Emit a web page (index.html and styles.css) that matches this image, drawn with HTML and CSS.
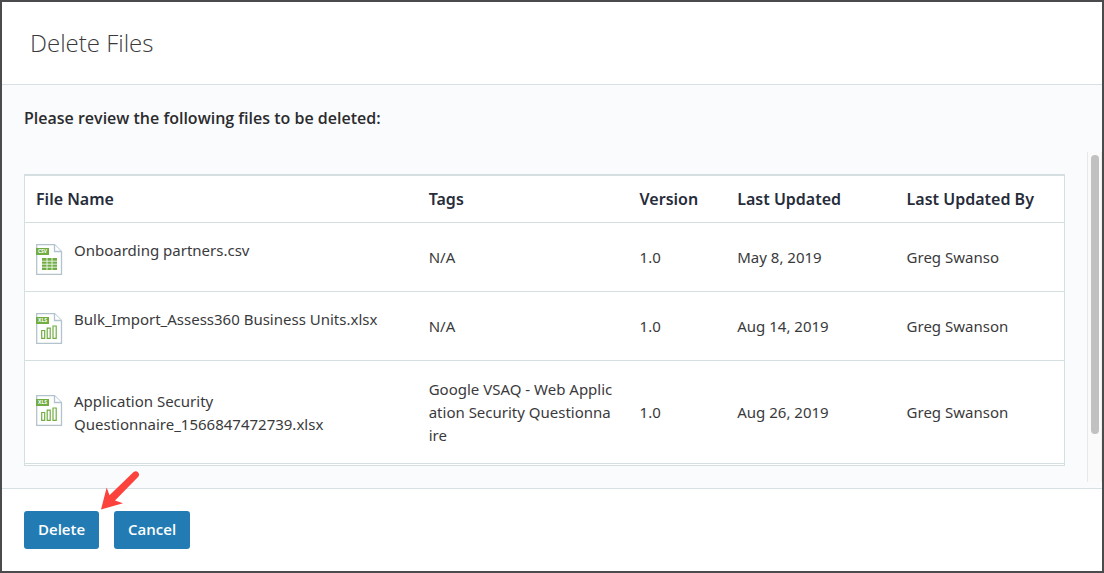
FILE: index.html
```html
<!DOCTYPE html>
<html lang="en">
<head>
    <meta charset="utf-8">
    <title>Delete Files</title>
    <link rel="stylesheet" href="styles.css">
</head>
<body>
    <div class="dialog">
        <header class="dialog-header">
            <h1>Delete Files</h1>
        </header>

        <main class="dialog-body">
            <p class="review-note">Please review the following files to be deleted:</p>
            <div class="scroll-area">
                <table class="file-table">
                    <thead>
                        <tr>
                            <th class="col-name">File Name</th>
                            <th class="col-tags">Tags</th>
                            <th class="col-version">Version</th>
                            <th class="col-updated">Last Updated</th>
                            <th class="col-user">Last Updated By</th>
                        </tr>
                    </thead>
                    <tbody>
                        <tr>
                            <td>
                                <div class="file">
                                    <svg class="file-icon" viewBox="0 0 27 31">
                                        <path class="page" d="M.7 .7H18.500L25.500 7.500V30.300H.7Z"/>
                                        <path class="page" d="M18.500 .7V7.500H25.500"/>
                                        <rect class="fill" x="0" y="4" width="13" height="7"/>
                                        <text class="ext" x="6.500" y="9.300">CSV</text>
                                        <rect class="fill" x="6" y="14" width="15" height="12"/>
                                        <path class="grid" d="M6 17.200H21M6 20.200H21M6 23.200H21M11 14V26M16 14V26"/>
                                    </svg>
                                    <span>Onboarding partners.csv</span>
                                </div>
                            </td>
                            <td class="tags">N/A</td>
                            <td>1.0</td>
                            <td>May 8, 2019</td>
                            <td>Greg Swanso</td>
                        </tr>
                        <tr>
                            <td>
                                <div class="file">
                                    <svg class="file-icon" viewBox="0 0 27 31">
                                        <path class="page" d="M.7 .7H18.500L25.500 7.500V30.300H.7Z"/>
                                        <path class="page" d="M18.500 .7V7.500H25.500"/>
                                        <rect class="fill" x="0" y="4" width="13" height="7"/>
                                        <text class="ext" x="6.500" y="9.300">XLS</text>
                                        <path class="bars" d="M5.700 17.500H8.700V25.300H5.700ZM11.200 15.200H14.200V25.300H11.200ZM17 13H20.200V25.300H17Z"/>
                                    </svg>
                                    <span>Bulk_Import_Assess360 Business Units.xlsx</span>
                                </div>
                            </td>
                            <td class="tags">N/A</td>
                            <td>1.0</td>
                            <td>Aug 14, 2019</td>
                            <td>Greg Swanson</td>
                        </tr>
                        <tr>
                            <td>
                                <div class="file">
                                    <svg class="file-icon" viewBox="0 0 27 31">
                                        <path class="page" d="M.7 .7H18.500L25.500 7.500V30.300H.7Z"/>
                                        <path class="page" d="M18.500 .7V7.500H25.500"/>
                                        <rect class="fill" x="0" y="4" width="13" height="7"/>
                                        <text class="ext" x="6.500" y="9.300">XLS</text>
                                        <path class="bars" d="M5.700 17.500H8.700V25.300H5.700ZM11.200 15.200H14.200V25.300H11.200ZM17 13H20.200V25.300H17Z"/>
                                    </svg>
                                    <span>Application Security Questionnaire_1566847472739.xlsx</span>
                                </div>
                            </td>
                            <td class="tags">Google VSAQ - Web Application Security Questionnaire</td>
                            <td>1.0</td>
                            <td>Aug 26, 2019</td>
                            <td>Greg Swanson</td>
                        </tr>
                    </tbody>
                </table>
                <div class="scroll-track">
                    <div class="scroll-thumb"></div>
                </div>
            </div>
        </main>

        <footer class="dialog-footer">
            <button type="button" class="btn">Delete</button>
            <button type="button" class="btn">Cancel</button>
            <svg class="pointer-arrow" viewBox="0 0 40 40">
                <path d="M33.600 1Q36 -.8 38.200 1.500Q40 3.800 38 6L15 29.500L23 32.200L1 38.500L6.700 16.500L9.500 24.300Z"/>
            </svg>
        </footer>
    </div>
</body>
</html>
```

FILE: styles.css
```css
* {
    box-sizing: border-box;
}

body {
    margin: 0;
    font-family: "Noto Sans", "Open Sans", sans-serif;
    font-size: 15px;
    line-height: 23px;
    color: #3a3a3c;
}

.dialog {
    display: flex;
    flex-direction: column;
    min-height: 100vh;
    border: 2px solid #4b4b4d;
    background-color: white;
}

.dialog-header {
    padding: 24px 28px;
    border-bottom: 1px solid #d7e0e4;
}

h1 {
    margin: 0;
    font-family: "Open Sans", sans-serif;
    font-size: 24px;
    font-weight: 300;
    line-height: 34px;
}

.dialog-body {
    padding: 22px 0 6px 22px;
    background-color: #fafbfd;
}

.review-note {
    margin: 0 0 22px;
    font-family: "Open Sans", sans-serif;
    font-size: 16px;
    font-weight: 600;
    color: #2b2b2d;
}

.scroll-area {
    display: flex;
    justify-content: space-between;
    gap: 22px;
}

.file-table {
    flex: 1;
    margin: 22px 0 16px;
    table-layout: fixed;
    border-collapse: separate;
    border-spacing: 0;
    border: 1px solid #d5dfe2;
    border-top-width: 2px;
    padding-bottom: 1px;
    background-color: white;
}

.file-table th,
.file-table td {
    padding: 16px 12px;
    border-bottom: 1px solid #d5dfe2;
    text-align: left;
    vertical-align: middle;
}

.file-table th {
    padding: 12px 12px 11px;
    font-size: 16px;
    font-weight: 600;
    color: #262c3a;
}

.file-table th:first-child,
.file-table td:first-child {
    padding-left: 11px;
}

.file-table tr:last-child td {
    padding-top: 17px;
}

.col-name {
    width: 37.7%;
}

.col-tags {
    width: 20.3%;
}

.col-version {
    width: 9.4%;
}

.col-updated {
    width: 16.3%;
}

.file-table .tags {
    padding-right: 14px;
    word-break: break-all;
}

.file {
    display: flex;
    align-items: flex-start;
    gap: 11px;
}

.file-icon {
    flex: none;
    width: 27px;
    height: 31px;
    margin-top: 5px;
}

.page {
    fill: white;
    stroke: #b3c3ce;
    stroke-width: 1.3;
}

.fill {
    fill: #71ad43;
}

.grid {
    stroke: white;
    stroke-width: 0.8;
}

.bars {
    fill: none;
    stroke: #71ad43;
    stroke-width: 1.2;
}

.ext {
    fill: white;
    font-size: 5px;
    font-weight: 700;
    text-anchor: middle;
}

.scroll-track {
    flex: none;
    width: 15px;
    padding: 3px;
    border-left: 1px solid #e8e8ea;
    border-right: 1px solid #efeff1;
    background-color: #fafafa;
}

.scroll-thumb {
    width: 8px;
    height: 86%;
    border-radius: 4px;
    background-color: #c1c1c1;
}

.dialog-footer {
    position: relative;
    display: flex;
    flex: 1;
    align-items: flex-start;
    gap: 15px;
    padding: 22px;
    border-top: 1px solid #d7e0e4;
}

.btn {
    padding: 7px 14px 8px;
    border: 0;
    border-radius: 3px;
    background-color: #227cb3;
    color: white;
    font-family: "Open Sans", sans-serif;
    font-size: 15px;
    font-weight: 600;
    line-height: 23px;
    cursor: pointer;
}

/* callout over the Delete button */
.pointer-arrow {
    position: absolute;
    top: -18px;
    left: 98px;
    width: 40px;
    height: 40px;
    fill: #fb423c;
}
```
